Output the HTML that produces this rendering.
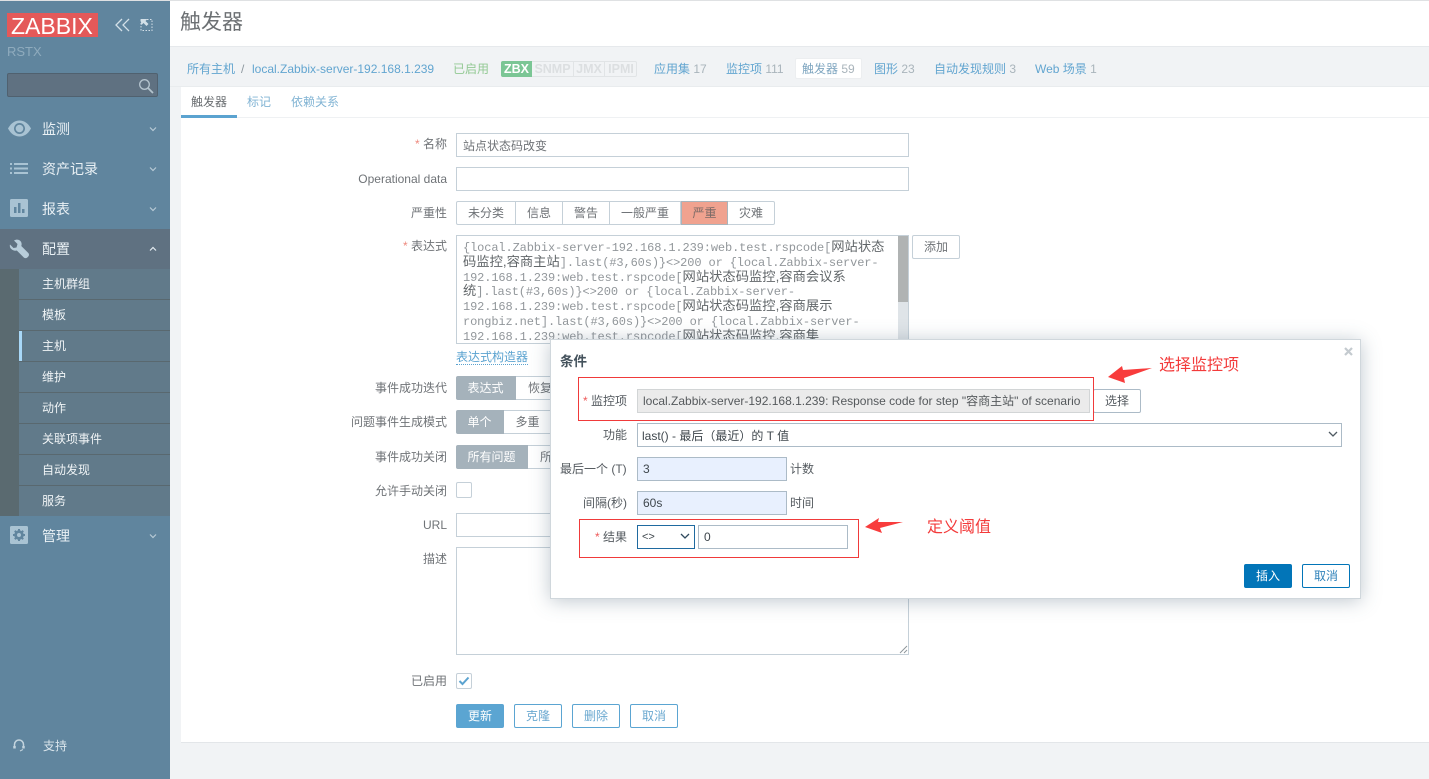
<!DOCTYPE html>
<html lang="zh"><head><meta charset="utf-8"><title>触发器</title>
<style>
*{box-sizing:border-box}
html,body{margin:0;padding:0}
body{position:relative;width:1429px;height:779px;overflow:hidden;background:#f1f3f5;font:12px/24px "Liberation Sans","Noto Sans CJK SC",sans-serif;color:#6f7377}
div,span.a,a,svg{position:absolute}
div,a{white-space:nowrap}
a{color:#62a5d0;text-decoration:none}
a i{font-style:normal;color:#a9b4bb}
.l{right:982px;height:24px;color:#6f7377}
.l b,.ml b{font-weight:400;color:#ee8a7e}
.in{background:#fff;border:1px solid #c5d0d8;height:24px}
.m{left:42px;color:#eaf1f5;font-size:14px;height:24px}
.s{left:19px;width:151px;height:31px;background:#617a8a;border-bottom:1px solid #59686f;color:#f0f4f6;line-height:30px;padding-left:23px}
.c{left:149px;width:8px;height:6px}
.seg{height:24px;border:1px solid #c5d0d8;border-left:0;text-align:center;line-height:22px;background:#fff;color:#6f7377}
.sel{background:#a5b2bb;border-color:#a5b2bb;color:#fff}
.btn{height:24px;width:48px;border:1px solid #5ba5d2;border-radius:2px;text-align:center;line-height:22px;color:#6aa8d0;background:#fff}
.mono{left:463px;font:12px/15px "Liberation Mono","Noto Sans CJK SC",monospace;letter-spacing:-.12px;color:#92979b;white-space:pre;height:15px}
.mono span{color:#62676a;font-size:13.300px;letter-spacing:0;font-family:"Liberation Sans","Noto Sans CJK SC",sans-serif}
.ml{height:24px;color:#555b60}
.mi{height:24px;border:1px solid #acbbc7;background:#fff;color:#3f474d;padding-left:5px;line-height:22px}
.red{border:1px solid #f03a3a}
.note{color:#f33b3b;font-size:16px;height:24px}
</style></head><body>

<!-- top hairline -->
<div style="left:0;top:0;width:1429px;height:1px;background:#dfe1e3"></div>

<!-- sidebar -->
<div style="left:0;top:1px;width:170px;height:778px;background:#60859e"></div>
<div style="left:7px;top:13px;width:91px;height:24px;background:#e45959"></div>
<svg style="left:7px;top:13px" width="91" height="24"><text x="4" y="21" font-family="Liberation Sans" font-size="23" fill="#fff">ZABBIX</text></svg>
<svg style="left:113px;top:16px" width="44" height="20" fill="none" stroke="#d3e0e8" stroke-width="1.300"><path d="M9 3 3 9l6 6M16 3l-6 6 6 6"/><path d="M28 3.500h11v11H28z" stroke-dasharray="1.500 1.500" stroke-width="1"/><path d="M27.500 3h7l-2 2 3 3-2 2-3-3-2 2z" fill="#d3e0e8" stroke="none"/></svg>
<div style="left:7px;top:40px;font-size:13px;color:#8fabbd;">RSTX</div>
<div style="left:7px;top:73px;width:151px;height:24px;background:#5f7181;border:1px solid #50616f;border-radius:2px"></div>
<svg style="left:137px;top:77px" width="18" height="18" fill="none" stroke="#b4c4ce" stroke-width="1.300"><circle cx="7.500" cy="7.500" r="4.800"/><path d="M11 11l5 5" stroke-width="1.800"/></svg>

<svg style="left:8px;top:120px" width="23" height="17"><path d="M0 8.500C3 3 7 .5 11.500.5S20 3 23 8.500C20 14 16 16.500 11.500 16.500S3 14 0 8.500z" fill="#a9c3d3"/><circle cx="11.500" cy="8.500" r="5.500" fill="#60859e"/><circle cx="11.500" cy="8.500" r="3.800" fill="#a9c3d3"/></svg>
<div class="m" style="top:117px">监测</div>
<svg class="c" style="top:126px" fill="none" stroke="#b8cad6" stroke-width="1.200"><path d="M1 1.500l3 3 3-3"/></svg>
<svg style="left:10px;top:163px" width="18" height="11" fill="#a9c3d3"><path d="M0 0h2v2H0zM4 0h14v2H4zM0 4.500h2v2H0zM4 4.500h14v2H4zM0 9h2v2H0zM4 9h14v2H4z"/></svg>
<div class="m" style="top:157px">资产记录</div>
<svg class="c" style="top:166px" fill="none" stroke="#b8cad6" stroke-width="1.200"><path d="M1 1.500l3 3 3-3"/></svg>
<svg style="left:10px;top:199px" width="18" height="18"><rect width="18" height="18" rx="1.500" fill="#a9c3d3"/><path d="M4 8h2.500v6H4zM8 4h2.500v10H8zM12 10h2.500v4H12z" fill="#60859e"/></svg>
<div class="m" style="top:197px">报表</div>
<svg class="c" style="top:206px" fill="none" stroke="#b8cad6" stroke-width="1.200"><path d="M1 1.500l3 3 3-3"/></svg>

<div style="left:0;top:229px;width:170px;height:40px;background:#5f7181"></div>
<svg style="left:9px;top:239px" width="20" height="20" fill="#b8cdda"><path d="M1 5.500 4.500 9l3-.5L8.500 5 5 1.500C7.500 0 10.500.5 11.800 2.500c1 1.500 1 3.200.5 4.500l7 7c.9 1 .9 2.500 0 3.500l-1 1c-1 .9-2.500.9-3.500 0l-7-7C6 12 3.800 11.500 2.300 10 1 8.800.5 7 1 5.500z"/></svg>
<div class="m" style="top:237px">配置</div>
<svg class="c" style="top:246px" fill="none" stroke="#e4ecf1" stroke-width="1.200"><path d="M1 4.500l3-3 3 3"/></svg>

<div style="left:0;top:269px;width:19px;height:247px;background:#5a6a70"></div>
<div class="s" style="top:269px">主机群组</div>
<div class="s" style="top:300px">模板</div>
<div class="s" style="top:331px">主机</div>
<div style="left:19px;top:331px;width:3px;height:30px;background:#a8d8f8"></div>
<div class="s" style="top:362px">维护</div>
<div class="s" style="top:393px">动作</div>
<div class="s" style="top:424px">关联项事件</div>
<div class="s" style="top:455px">自动发现</div>
<div class="s" style="top:486px;height:30px;border-bottom:0">服务</div>

<svg style="left:10px;top:526px" width="18" height="18"><rect width="18" height="18" rx="1.500" fill="#a9c3d3"/><circle cx="9" cy="9" r="4.800" fill="#60859e"/><path d="M9 3v12M3 9h12M4.800 4.800l8.400 8.400M13.200 4.800l-8.400 8.400" stroke="#60859e" stroke-width="2"/><circle cx="9" cy="9" r="2" fill="#a9c3d3"/></svg>
<div class="m" style="top:524px">管理</div>
<svg class="c" style="top:533px" fill="none" stroke="#b8cad6" stroke-width="1.200"><path d="M1 1.500l3 3 3-3"/></svg>

<svg style="left:13px;top:739px" width="12" height="13" fill="none" stroke="#c3d4de" stroke-width="1.500"><path d="M1.500 8V5.500a4.500 4.500 0 0 1 9 0V8"/><path d="M1.500 7v2.500M10.500 7v2.500" stroke-width="2.500"/><path d="M10 10.500 7 12" stroke-width="1"/></svg>
<div style="left:43px;top:734px;color:#dbe6ec">支持</div>

<!-- header -->
<div style="left:170px;top:1px;width:1259px;height:45px;background:#fff"></div>
<div style="left:180px;top:8px;font-size:21px;line-height:30px;color:#6c7073">触发器</div>
<div style="left:170px;top:46px;width:1259px;height:1px;background:#e6e9ec"></div>

<!-- host nav -->
<a style="left:187px;top:57px">所有主机</a>
<div style="left:241px;top:57px;color:#8d979e">/</div>
<a style="left:252px;top:57px">local.Zabbix-server-192.168.1.239</a>
<div style="left:453px;top:57px;color:#93c994">已启用</div>
<div style="left:501px;top:61px;width:136px;height:16px;border:1px solid #e1e4e6;border-radius:2px"></div>
<div style="left:501px;top:61px;width:31px;height:16px;background:#7bc695;color:#fff;text-align:center;line-height:16px;font-size:12.500px;font-weight:700;border-radius:2px 0 0 2px">ZBX</div>
<div style="left:532px;top:61px;width:42px;height:16px;color:#dcdfe1;text-align:center;line-height:16px;font-size:12.500px;font-weight:700;border-right:1px solid #e1e4e6">SNMP</div>
<div style="left:574px;top:61px;width:31px;height:16px;color:#dcdfe1;text-align:center;line-height:16px;font-size:12.500px;font-weight:700;border-right:1px solid #e1e4e6">JMX</div>
<div style="left:605px;top:61px;width:32px;height:16px;color:#dcdfe1;text-align:center;line-height:16px;font-size:12.500px;font-weight:700">IPMI</div>
<a style="left:654px;top:57px">应用集 <i>17</i></a>
<a style="left:726px;top:57px">监控项 <i>111</i></a>
<div style="left:795px;top:58px;width:67px;height:21px;background:#fff;border:1px solid #eceef0;border-radius:2px"></div>
<a style="left:802px;top:57px;color:#7fa6c0">触发器 <i>59</i></a>
<a style="left:874px;top:57px">图形 <i>23</i></a>
<a style="left:934px;top:57px">自动发现规则 <i>3</i></a>
<a style="left:1035px;top:57px">Web 场景 <i>1</i></a>

<!-- form panel -->
<div style="left:181px;top:87px;width:1248px;height:656px;background:#fff;border-bottom:1px solid #e3e6e9"></div>
<div style="left:170px;top:86px;width:1259px;height:1px;background:#e9ecee"></div>
<div style="left:181px;top:117px;width:1248px;height:1px;background:#eff1f3"></div>
<div style="left:191px;top:90px;color:#6a6e71">触发器</div>
<div style="left:181px;top:115px;width:56px;height:3px;background:#5ba3d0"></div>
<a style="left:247px;top:90px;color:#82b4d4">标记</a>
<a style="left:291px;top:90px;color:#82b4d4">依赖关系</a>

<div class="l" style="top:132px"><b>*</b> 名称</div>
<div class="in" style="left:456px;top:133px;width:453px;padding-left:6px;line-height:24px">站点状态码改变</div>
<div class="l" style="top:167px">Operational data</div>
<div class="in" style="left:456px;top:167px;width:453px"></div>
<div class="l" style="top:201px">严重性</div>
<div class="seg" style="left:456px;top:201px;width:60px;border-left:1px solid #c5d0d8;border-radius:2px 0 0 2px">未分类</div>
<div class="seg" style="left:516px;top:201px;width:47px">信息</div>
<div class="seg" style="left:563px;top:201px;width:47px">警告</div>
<div class="seg" style="left:610px;top:201px;width:71px">一般严重</div>
<div class="seg" style="left:681px;top:201px;width:47px;background:#f0a28f;border-color:#a9b4bb;border-left:1px solid #a9b4bb;color:#7b6a66">严重</div>
<div class="seg" style="left:728px;top:201px;width:47px;border-radius:0 2px 2px 0">灾难</div>

<div class="l" style="top:234px"><b>*</b> 表达式</div>
<div class="in" style="left:456px;top:235px;width:453px;height:109px"></div>
<div style="left:898px;top:236px;width:10px;height:107px;background:#dfe4e8"></div>
<div style="left:898px;top:236px;width:10px;height:66px;background:#b0b3b3"></div>
<div class="mono" style="top:239px">{local.Zabbix-server-192.168.1.239:web.test.rspcode[<span>网站状态</span></div>
<div class="mono" style="top:254px"><span>码监控,容商主站</span>].last(#3,60s)}&lt;&gt;200 or {local.Zabbix-server-</div>
<div class="mono" style="top:269px">192.168.1.239:web.test.rspcode[<span>网站状态码监控,容商会议系</span></div>
<div class="mono" style="top:283px"><span>统</span>].last(#3,60s)}&lt;&gt;200 or {local.Zabbix-server-</div>
<div class="mono" style="top:298px">192.168.1.239:web.test.rspcode[<span>网站状态码监控,容商展示</span></div>
<div class="mono" style="top:315px">rongbiz.net].last(#3,60s)}&lt;&gt;200 or {local.Zabbix-server-</div>
<div class="mono" style="top:328px">192.168.1.239:web.test.rspcode[<span>网站状态码监控,容商集</span></div>
<div class="btn" style="left:912px;top:235px;border-color:#c5d0d8;color:#6f7377">添加</div>
<a style="left:456px;top:345px;height:24px;color:#5ba3d0"><span style="border-bottom:1px dotted #5ba3d0">表达式构造器</span></a>

<div class="l" style="top:376px">事件成功迭代</div>
<div class="seg sel" style="left:456px;top:376px;width:60px;border-radius:2px 0 0 2px">表达式</div>
<div class="seg" style="left:516px;top:376px;width:60px;text-align:left;padding-left:12px">恢复表达式</div>
<div class="l" style="top:410px">问题事件生成模式</div>
<div class="seg sel" style="left:456px;top:410px;width:48px;border-radius:2px 0 0 2px">单个</div>
<div class="seg" style="left:504px;top:410px;width:48px">多重</div>
<div class="l" style="top:445px">事件成功关闭</div>
<div class="seg sel" style="left:456px;top:445px;width:72px;border-radius:2px 0 0 2px">所有问题</div>
<div class="seg" style="left:528px;top:445px;width:40px;text-align:left;padding-left:12px">所有</div>
<div class="l" style="top:479px">允许手动关闭</div>
<div style="left:456px;top:482px;width:16px;height:16px;border:1px solid #c5d0d8;border-radius:2px;background:#fff"></div>
<div class="l" style="top:513px">URL</div>
<div class="in" style="left:456px;top:513px;width:453px"></div>
<div class="l" style="top:547px">描述</div>
<div class="in" style="left:456px;top:547px;width:453px;height:108px"></div>
<svg style="left:899px;top:645px" width="9" height="9" stroke="#8f979c" fill="none"><path d="M1 8 8 1M5 8l3-3"/></svg>
<div class="l" style="top:669px">已启用</div>
<div style="left:456px;top:673px;width:16px;height:16px;border:1px solid #c5d0d8;border-radius:2px;background:#fff"></div>
<svg style="left:458px;top:676px" width="12" height="10" fill="none" stroke="#5ba3d0" stroke-width="2"><path d="M1.500 5l3 3 6-6.500"/></svg>
<div class="btn" style="left:456px;top:704px;background:#5ba5d2;color:#fff">更新</div>
<div class="btn" style="left:514px;top:704px">克隆</div>
<div class="btn" style="left:572px;top:704px">删除</div>
<div class="btn" style="left:630px;top:704px">取消</div>

<!-- modal -->
<div style="left:550px;top:339px;width:811px;height:260px;background:#fff;border:1px solid #d0d7dc;box-shadow:0 2px 18px rgba(70,95,115,.34)"></div>
<div style="left:560px;top:349px;font-size:13.500px;font-weight:700;color:#44525c;line-height:25px">条件</div>
<svg style="left:1344px;top:347px" width="9" height="9" stroke="#c4cacf" stroke-width="2.200"><path d="M1 1l7 7M8 1 1 8"/></svg>

<div class="ml" style="left:583px;top:389px"><b style="font-weight:400;color:#ee5a5a">*</b> 监控项</div>
<div class="mi" style="left:637px;top:389px;width:453px;background:#ebebeb;border-color:#d2d5d6;color:#55595c">local.Zabbix-server-192.168.1.239: Response code for step "容商主站" of scenario</div>
<div class="btn" style="left:1093px;top:389px;border-color:#acbbc7;color:#555b60">选择</div>
<div class="red" style="left:578px;top:377px;width:516px;height:44px"></div>

<div class="ml" style="left:603px;top:423px">功能</div>
<div class="mi" style="left:637px;top:423px;width:705px;padding-left:4px;line-height:24px">last() - 最后（最近）的 T 值</div>
<svg style="left:1328px;top:431px" width="10" height="7" fill="none" stroke="#4f5a62" stroke-width="1.300"><path d="M1 1l4 4 4-4"/></svg>

<div class="ml" style="left:560px;top:457px">最后一个 (T)</div>
<div class="mi" style="left:637px;top:457px;width:150px;background:#e8f0fe">3</div>
<div class="ml" style="left:790px;top:457px">计数</div>
<div class="ml" style="left:583px;top:491px">间隔(秒)</div>
<div class="mi" style="left:637px;top:491px;width:150px;background:#e8f0fe">60s</div>
<div class="ml" style="left:790px;top:491px">时间</div>

<div class="ml" style="left:595px;top:525px"><b style="font-weight:400;color:#ee5a5a">*</b> 结果</div>
<div class="mi" style="left:637px;top:525px;width:58px;border-color:#1f6aa0;padding-left:4px;font-size:11px">&lt;&gt;</div>
<svg style="left:680px;top:533px" width="10" height="7" fill="none" stroke="#2f4a5e" stroke-width="1.300"><path d="M1 1l4 4 4-4"/></svg>
<div class="mi" style="left:698px;top:525px;width:150px">0</div>
<div class="red" style="left:579px;top:519px;width:280px;height:39px"></div>

<svg style="left:1100px;top:360px" width="60" height="30" fill="#f83c3c"><path d="M8 17 22 6l1 4 29-2-28 10 1 5z"/></svg>
<div class="note" style="left:1159px;top:354px">选择监控项</div>
<svg style="left:860px;top:512px" width="50" height="26" fill="#f83c3c"><path d="M5 15 19 6l-1 4h25l-23 6 2 5z"/></svg>
<div class="note" style="left:927px;top:516px">定义阈值</div>

<div class="btn" style="left:1244px;top:564px;background:#0275b8;border-color:#0275b8;color:#fff">插入</div>
<div class="btn" style="left:1302px;top:564px;border-color:#0275b8;color:#2f82ba">取消</div>

</body></html>
